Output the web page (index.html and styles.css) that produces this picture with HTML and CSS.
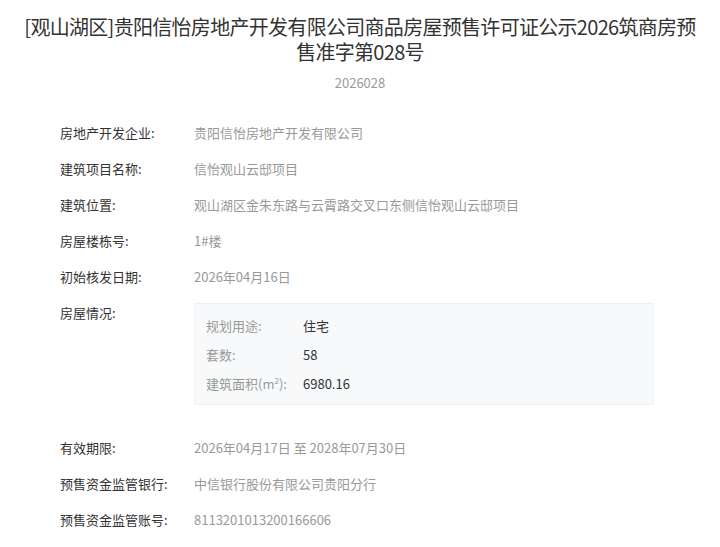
FILE: index.html
```html
<!DOCTYPE html>
<html>
    <head>
        <meta charset="utf-8">
        <meta name="viewport" content="width=device-width, initial-scale=1">
        <link rel="stylesheet" href="styles.css">
    </head>
    <body>
        <!--notice starts-->
        <div class="notice">
            <h1 class="title">[观山湖区]贵阳信怡房地产开发有限公司商品房屋预售许可证公示2026筑商房预售准字第028号</h1>
            <p class="subtitle">2026028</p>

            <div class="info">
                <div class="row">
                    <span class="label">房地产开发企业:</span>
                    <span class="value">贵阳信怡房地产开发有限公司</span>
                </div>
                <div class="row">
                    <span class="label">建筑项目名称:</span>
                    <span class="value">信怡观山云邸项目</span>
                </div>
                <div class="row">
                    <span class="label">建筑位置:</span>
                    <span class="value">观山湖区金朱东路与云霄路交叉口东侧信怡观山云邸项目</span>
                </div>
                <div class="row">
                    <span class="label">房屋楼栋号:</span>
                    <span class="value">1#楼</span>
                </div>
                <div class="row">
                    <span class="label">初始核发日期:</span>
                    <span class="value">2026年04月16日</span>
                </div>
                <div class="row">
                    <span class="label">房屋情况:</span>
                    <div class="house">
                        <div class="house-row">
                            <span class="house-label">规划用途:</span>
                            <span class="house-value">住宅</span>
                        </div>
                        <div class="house-row">
                            <span class="house-label">套数:</span>
                            <span class="house-value">58</span>
                        </div>
                        <div class="house-row">
                            <span class="house-label">建筑面积(m<sup>2</sup>):</span>
                            <span class="house-value">6980.16</span>
                        </div>
                    </div>
                </div>
                <div class="row">
                    <span class="label">有效期限:</span>
                    <span class="value">2026年04月17日 至 2028年07月30日</span>
                </div>
                <div class="row">
                    <span class="label">预售资金监管银行:</span>
                    <span class="value">中信银行股份有限公司贵阳分行</span>
                </div>
                <div class="row">
                    <span class="label">预售资金监管账号:</span>
                    <span class="value">8113201013200166606</span>
                </div>
            </div>
        </div>
        <!--notice ends-->
    </body>
</html>
```

FILE: styles.css
```css
/* notice page */
* {box-sizing: border-box}

body {
  margin: 0;
  background: #fff;
  font-family: "Noto Sans CJK SC", "Noto Sans", sans-serif;
  color: #333;
}

.notice {
  padding: 14px 20px 0 20px;
}

/* heading */
.title {
  margin: 0;
  font-size: 20px;
  line-height: 25px;
  font-weight: normal;
  letter-spacing: -0.7px;
  text-align: center;
  color: #333;
}

.subtitle {
  margin: 9px 0 0 0;
  font-size: 13px;
  line-height: 20px;
  text-align: center;
  color: #999;
}

/* field rows */
.info {
  margin-top: 22px;
  padding-left: 40px;
}

.row {
  display: flex;
  align-items: flex-start;
  padding: 8px 0;
  font-size: 13px;
  line-height: 20px;
}

.label {
  width: 134px;
  flex-shrink: 0;
  color: #333;
}

.value {
  color: #999;
}

/* house box */
.house {
  width: 460px;
  margin-bottom: 17px;
  padding: 8px 11px 5px 11px;
  background: #f7f9fa;
  border: 1px solid #eef0f2;
}

.house-row {
  display: flex;
  padding: 4px 0 5px 0;
  line-height: 20px;
}

.house-label {
  width: 97px;
  color: #999;
}

.house-value {
  color: #333;
}

sup {
  font-size: 8px;
  line-height: 0;
}
```
